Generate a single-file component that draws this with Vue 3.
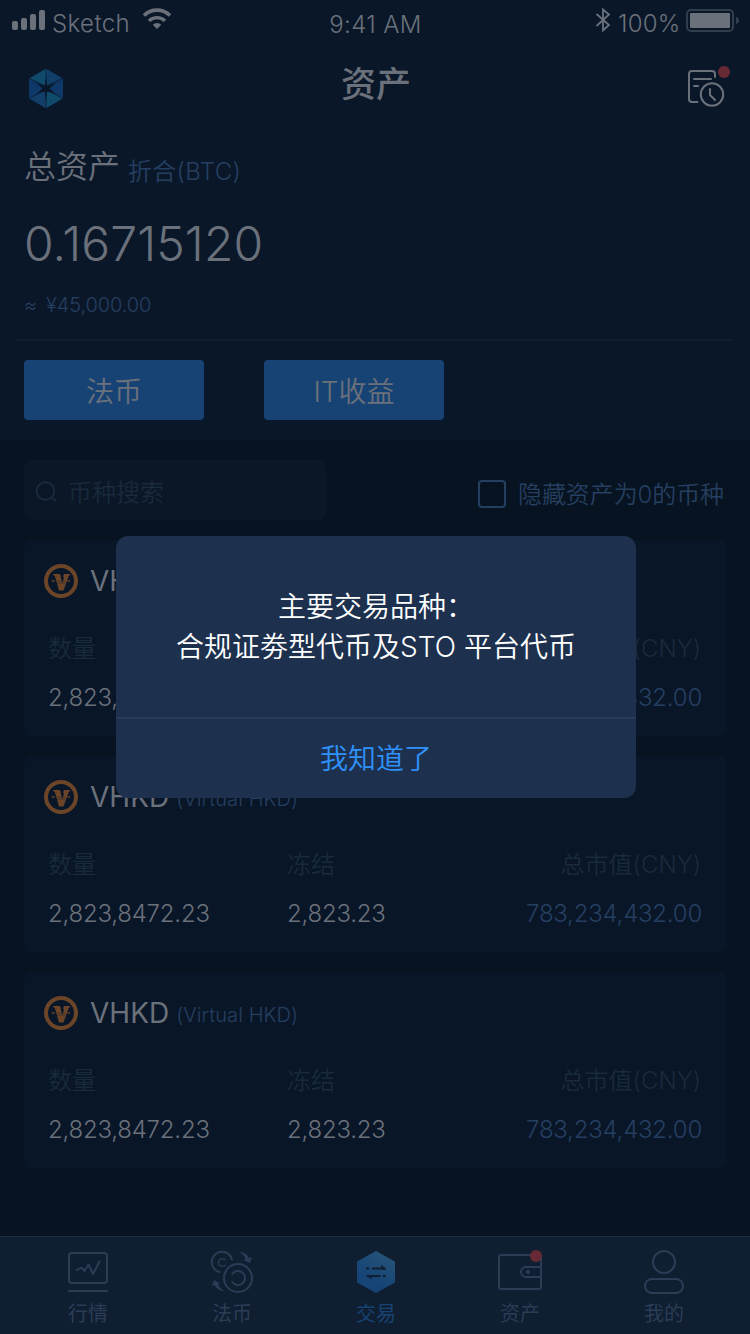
<script setup>
const rows = [1, 2, 3]
const tabs = [
  { id: 'quotes', label: '行情' },
  { id: 'fiat', label: '法币' },
  { id: 'trade', label: '交易', active: true },
  { id: 'assets', label: '资产' },
  { id: 'mine', label: '我的' },
]
</script>

<template>
  <main class="screen">
    <section class="summary">
      <div class="status">
        <div class="carrier">
          <svg width="34" height="22" viewBox="0 0 34 22" fill="#6b717b">
            <rect x="0" y="12" width="6" height="9" rx="2" />
            <rect x="9" y="9" width="6" height="12" rx="2" />
            <rect x="18" y="5" width="6" height="16" rx="2" />
            <rect x="27" y="1" width="6" height="20" rx="2" />
          </svg>
          <span class="carrier-name">Sketch</span>
          <svg class="wifi" width="30" height="22" viewBox="0 0 30 22" fill="none" stroke="#6b717b">
            <path d="M2 7.5A18.5 18.5 0 0 1 28 7.5" stroke-width="3.6" />
            <path d="M7 12.9A11.5 11.5 0 0 1 23 12.9" stroke-width="3.4" />
            <path d="M15 21L10.8 16.8A6 6 0 0 1 19.2 16.8Z" fill="#6b717b" stroke="none" />
          </svg>
        </div>
        <span class="time">9:41 AM</span>
        <div class="power">
          <svg width="16" height="26" viewBox="0 0 16 26" fill="none" stroke="#6b717b" stroke-width="1.8">
            <path d="M1.5 7L14 18L8 23.5V2.5L14 7.5L1.5 19" />
          </svg>
          <span class="percent">100%</span>
          <svg width="54" height="24" viewBox="0 0 54 24">
            <rect x="1" y="1" width="46" height="21" rx="4" fill="none" stroke="#333e4d" stroke-width="2" />
            <rect x="4" y="4" width="40" height="15" rx="1" fill="#6b717b" />
            <path d="M50 8c4 1 4 6 0 7z" fill="#333e4d" />
          </svg>
        </div>
      </div>

      <header class="header">
        <svg width="36" height="42" viewBox="0 0 36 42">
          <path d="M18 1L1 10.500v20L18 40l17-9.500v-20z" fill="#0c2a4a" />
          <path d="M17.500 1V17.500L2 10z" fill="#104b6b" />
          <path d="M18.500 1V17.500L34 10z" fill="#123f69" />
          <path d="M1 11L14.500 19V22L1 30z" fill="#0e3868" />
          <path d="M35 11L21.500 19V22L35 30z" fill="#0e3868" />
          <path d="M1.800 30.800L15.500 23.500L17.400 24V40z" fill="#123f69" />
          <path d="M34.200 30.800L20.500 23.500L18.600 24V40z" fill="#104b6b" />
          <path d="M18 8l1.200 9.500L27 15.500 21.500 20.500 27 25.500 19.200 23.500 18 33 16.800 23.500 9 25.500 14.500 20.500 9 15.500 16.800 17.500z" fill="#0a1729" />
        </svg>
        <h1>资产</h1>
        <svg width="46" height="44" viewBox="0 0 46 44" fill="none" stroke="#6b717b" stroke-width="2" stroke-linecap="round">
          <path d="M31 13V10a3 3 0 0 0-3-3H8a3 3 0 0 0-3 3v25a3 3 0 0 0 3 3h5.500M10 15h17M10 22h4" />
          <circle cx="28" cy="30.500" r="11.200" />
          <path d="M26 25v6l5 5" />
          <circle cx="40" cy="8" r="6" fill="#672a35" stroke="none" />
        </svg>
      </header>

      <div class="total">
        <p class="total-title">总资产<span>折合(BTC)</span></p>
        <p class="amount">0.16715120</p>
        <p class="approx"><span>≈</span>¥45,000.00</p>
      </div>
      <div class="actions">
        <button>法币</button>
        <button>IT收益</button>
      </div>
    </section>

    <div class="filters">
      <div class="search">
        <svg width="22" height="22" viewBox="0 0 22 22" fill="none" stroke="#182a3b" stroke-width="2">
          <circle cx="9.500" cy="10" r="8.800" />
          <path d="M15.500 16L20 20.500" />
        </svg>
        <span>币种搜索</span>
      </div>
      <div class="hide-zero"><i></i><span>隐藏资产为0的币种</span></div>
    </div>

    <div class="list">
      <article v-for="row in rows" :key="row" class="card">
        <div class="coin">
          <svg width="34" height="34" viewBox="0 0 34 34">
            <circle cx="17" cy="17" r="15" fill="none" stroke="#6c4529" stroke-width="4" />
            <path d="M8.500 10h7.500L18.300 19.500 20 13.500 19 12.500 20 10h6.500L24.500 12.500 19.500 26.500h-4.500L11 12.500z" fill="#6c4529" />
            <path d="M8 17h2.500M23.500 17h2.500" stroke="#6c4529" stroke-width="1.600" />
            <path d="M12 17.300h10M13 19.300h8" stroke="#2c2a2c" stroke-width=".5" />
          </svg>
          <strong>VHKD</strong>
          <em>(Virtual HKD)</em>
        </div>
        <div class="labels"><span>数量</span><span>冻结</span><span>总市值(CNY)</span></div>
        <div class="values"><span>2,823,8472.23</span><span>2,823.23</span><span>783,234,432.00</span></div>
      </article>
    </div>

    <nav class="tabbar">
      <div v-for="tab in tabs" :key="tab.id" class="tab" :class="{ active: tab.active }">
        <svg width="56" height="56" viewBox="0 0 56 56" fill="none" stroke="#2b3d56" stroke-width="2" stroke-linecap="round" stroke-linejoin="round">
          <template v-if="tab.id === 'quotes'">
            <rect x="9" y="9" width="38" height="30" rx="3" />
            <path d="M9 47h38M16.500 26l5.500-2.300 2.300 3.300 4.200-6.500L33 30l6.500-12.500" />
          </template>
          <template v-else-if="tab.id === 'fiat'">
            <path d="M28 15.500A10.300 10.300 0 1 0 15.500 28" />
            <path d="M21 15.800a3.800 3.800 0 1 0 0 5.400" stroke-width="1.500" />
            <circle cx="34" cy="34" r="14" />
            <path d="M28.300 30a7 7 0 1 1 0 8" />
            <path d="M34.500 8C40 8 43.500 10.500 44.800 14L48 13.500 46 19 39.500 16l2.300-1C40.500 11.500 38 9.500 34.500 8z" fill="#2b3d56" stroke="none" />
            <path d="M21 47C15.500 47 12 44.500 10.700 41L8 42l2-6 6 3.500-2 1C15.500 43.500 17.500 46 21 47z" fill="#2b3d56" stroke="none" />
          </template>
          <template v-else-if="tab.id === 'trade'">
            <defs>
              <linearGradient id="hex" x1=".75" y1="0" x2=".4" y2=".7">
                <stop stop-color="#275477" />
                <stop offset="1" stop-color="#164477" />
              </linearGradient>
            </defs>
            <path d="M28 8L46 18V38L28 48L10 38V18z" fill="url(#hex)" stroke="url(#hex)" />
            <path d="M18.200 24.500h3M24 24.500h13.500M19 32h13.500M34.700 32h3" stroke="#0f1e30" stroke-linecap="butt" />
            <path d="M33 20.800l5.500 4.700H33zM23.500 35.500L18 31h5.500z" fill="#0f1e30" stroke="none" />
          </template>
          <template v-else-if="tab.id === 'assets'">
            <rect x="7" y="11" width="42" height="34" rx="2.500" />
            <path d="M49 23H34a5 5 0 0 0 0 10h15" />
            <circle cx="36" cy="28" r="2" fill="#2b3d56" stroke="none" />
            <circle cx="44" cy="12" r="6" fill="#672a35" stroke="none" />
          </template>
          <template v-else>
            <circle cx="28" cy="18" r="11" />
            <rect x="9" y="35" width="38" height="14" rx="7" />
          </template>
        </svg>
        <span>{{ tab.label }}</span>
      </div>
    </nav>

    <div class="dialog">
      <p>主要交易品种：<br>合规证劵型代币及STO 平台代币</p>
      <button>我知道了</button>
    </div>
  </main>
</template>

<style>
body { margin: 0; background: #071321; }
</style>

<style scoped>
* { box-sizing: border-box; }
p, h1 { margin: 0; }
svg { display: block; flex: none; }
.screen {
  position: relative;
  display: flex;
  flex-direction: column;
  width: 750px;
  height: 1334px;
  overflow: hidden;
  background: #071321;
  color: #6b717b;
  font-family: Inter, "Noto Sans CJK SC", sans-serif;
  font-weight: 350;
  white-space: nowrap;
}
button {
  padding: 0;
  border: 0;
  color: inherit;
  font: inherit;
}
.summary { height: 440px; background: #0a1729; }
.status {
  display: grid;
  grid-template-columns: 1fr auto 1fr;
  height: 44px;
  padding: 0 10px 0 12px;
  font-size: 24px;
}
.carrier, .power { display: flex; height: 44px; }
.carrier > svg { margin-top: 9px; }
.carrier-name { margin-left: 6px; width: 78px; line-height: 47px; letter-spacing: 0.4px; }
.carrier > .wifi { margin-left: 12px; margin-top: 8px; }
.time { margin-left: -1px; line-height: 49px; letter-spacing: 0.4px; }
.power { justify-content: flex-end; }
.power svg:first-child { margin-top: 7px; }
.power svg:last-child { margin-top: 9px; }
.percent { width: 61px; margin: 0 7px; line-height: 47px; letter-spacing: 0.2px; }
.header {
  display: flex;
  justify-content: space-between;
  height: 84px;
  padding: 20px 20px 0 28px;
}
.header svg:first-child { margin-top: 4px; }
.header h1 { margin-left: 4px; font-size: 35px; font-weight: 500; line-height: 41px; }
.total {
  height: 213px;
  margin: 0 16px;
  padding: 18px 8px 0;
  border-bottom: 2px solid #0f1d2f;
}
.total-title { display: flex; height: 42px; font-size: 32px; line-height: 42px; }
.total-title span { margin: 5px 0 0 8px; color: #253f60; font-size: 24px; letter-spacing: 0.3px; }
.amount { margin-top: 25px; font-size: 48px; line-height: 61px; letter-spacing: 0.15px; }
.approx { margin-top: 16px; color: #253f60; font-size: 20px; line-height: 30px; letter-spacing: -0.1px; }
.approx span { margin-right: 9px; }
.actions { display: flex; gap: 60px; padding: 19px 24px; }
.actions button {
  width: 180px;
  height: 60px;
  border-radius: 4px;
  background: #174374;
  font-size: 28px;
}
.filters { display: flex; justify-content: space-between; padding: 20px 26px 20px 24px; }
.search {
  display: flex;
  align-items: center;
  width: 302px;
  height: 60px;
  padding: 4px 12px 0;
  border-radius: 8px;
  background: #0b1727;
  color: #182a3b;
  font-size: 24px;
}
.search span { margin: -3px 0 0 10px; }
.hide-zero { display: flex; align-items: center; padding-top: 8px; color: #253f60; font-size: 24px; }
.hide-zero i { width: 28px; height: 28px; margin-right: 12px; border: 2px solid #253f60; border-radius: 4px; }
.hide-zero span { margin-top: -4px; letter-spacing: -0.1px; }
.list { display: grid; gap: 20px; padding: 0 24px; }
.card { height: 196px; padding: 20px 24px 0; border-radius: 6px; background: #091628; }
.coin { display: flex; align-items: center; height: 42px; margin-left: -4px; }
.coin strong { margin-left: 12px; font-size: 28px; font-weight: 400; line-height: 40px; }
.coin em { margin: 4px 0 0 7px; color: #253f60; font-size: 20px; font-style: normal; letter-spacing: 0.1px; }
.labels, .values { display: grid; grid-template-columns: 239px 1fr auto; font-size: 24px; line-height: 40px; }
.labels { margin-top: 27px; color: #182a3b; }
.labels span:last-child { margin-right: 1px; }
.values { margin-top: 9px; letter-spacing: -0.22px; }
.values span:last-child { color: #253f60; }
.tabbar {
  display: flex;
  height: 98px;
  margin-top: auto;
  padding: 7px 14px 0 16px;
  border-top: 1px solid #1c2c42;
  background: #0f1e30;
}
.tab {
  display: flex;
  flex-direction: column;
  align-items: center;
  width: 144px;
  color: #2b3d56;
  font-size: 20px;
  font-weight: 400;
  line-height: 28px;
}
.tab.active { color: #174374; }
.dialog {
  position: absolute;
  top: 536px;
  left: 116px;
  width: 520px;
  height: 262px;
  border-radius: 12px;
  overflow: hidden;
  background: #1d314e;
  color: #fff;
  font-size: 28px;
  line-height: 40px;
  text-align: center;
}
.dialog p { height: 183px; padding-top: 51px; border-bottom: 2px solid #283c59; }
.dialog button { width: 100%; height: 79px; background: transparent; color: #2f92fb; }
</style>
